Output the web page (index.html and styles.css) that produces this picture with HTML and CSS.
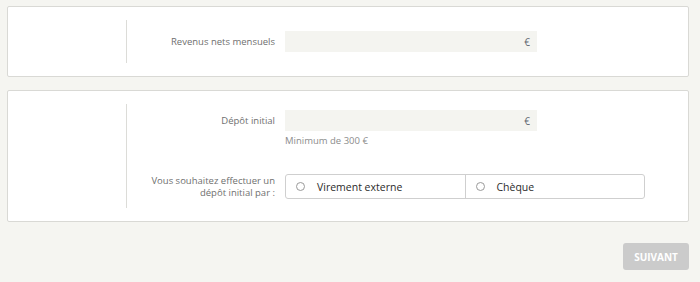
FILE: index.html
```html
<!DOCTYPE html>
<html lang="fr">
<head>
  <meta charset="UTF-8" />
  <title>Ouverture de compte</title>
  <link rel="stylesheet" href="styles.css">
</head>
<body>

  <div class="card card-first">
    <div class="side"></div>
    <div class="fields">
      <div class="row">
        <label class="label" for="revenus">Revenus nets mensuels</label>
        <div class="money">
          <input type="text" id="revenus">
          <span class="currency">€</span>
        </div>
      </div>
    </div>
  </div>

  <div class="card card-second">
    <div class="side"></div>
    <div class="fields">
      <div class="row">
        <label class="label" for="depot">Dépôt initial</label>
        <div class="money">
          <input type="text" id="depot">
          <span class="currency">€</span>
        </div>
      </div>
      <div class="hint">Minimum de 300 €</div>

      <div class="row row-radio">
        <div class="label">Vous souhaitez effectuer un<br>dépôt initial par :</div>
        <div class="radio-group">
          <label class="radio-option">
            <input type="radio" name="mode">
            <span>Virement externe</span>
          </label>
          <label class="radio-option">
            <input type="radio" name="mode">
            <span>Chèque</span>
          </label>
        </div>
      </div>
    </div>
  </div>

  <div class="actions">
    <button class="next" disabled>SUIVANT</button>
  </div>

</body>
</html>
```

FILE: styles.css
```css
body {
  font-family: "Open Sans", Arial, sans-serif;
  background: #f5f5f1;
  margin: 0;
  padding: 6px 11px 0 7px;
}

.card {
  display: flex;
  background: #fff;
  border: 1px solid #d9d9d5;
  border-radius: 2px;
}

.card-first {
  padding: 13px 0 13px;
  margin-bottom: 13px;
}

.card-second {
  padding: 13px 0 13px;
}

.side {
  width: 118px;
  border-right: 1px solid #dcdcd8;
}

.fields {
  flex: 1;
}

.card-first .fields {
  padding: 11px 0 11px;
}

.card-second .fields {
  padding: 6px 0 9px;
}

.row {
  display: flex;
  align-items: center;
}

.label {
  width: 148px;
  margin-right: 10px;
  text-align: right;
  font-size: 9.5px;
  line-height: 12px;
  color: #6f6f6f;
}

.money {
  position: relative;
  width: 252px;
}

.money input {
  display: block;
  width: 100%;
  height: 21px;
  box-sizing: border-box;
  border: none;
  background: #f4f4f0;
  padding: 0 20px 0 8px;
  font-family: inherit;
  font-size: 10px;
}

.currency {
  position: absolute;
  right: 7px;
  top: 4px;
  font-size: 10px;
  color: #5f6670;
}

.hint {
  margin: 4px 0 0 158px;
  font-size: 9.5px;
  line-height: 12px;
  color: #8c8c8c;
}

.row-radio {
  margin-top: 27px;
}

.radio-group {
  display: flex;
  width: 360px;
  height: 25px;
  box-sizing: border-box;
  border: 1px solid #cfcfcf;
  border-radius: 3px;
}

.radio-option {
  flex: 1;
  display: flex;
  align-items: center;
  padding-left: 10px;
  font-size: 10.5px;
  color: #2b2b2b;
}

.radio-option + .radio-option {
  border-left: 1px solid #cfcfcf;
}

.radio-option input {
  appearance: none;
  width: 9px;
  height: 9px;
  margin: 0 12px 0 0;
  border: 1px solid #9a9a9a;
  border-radius: 50%;
  background: #fff;
}

.actions {
  display: flex;
  justify-content: flex-end;
  margin-top: 21px;
}

.next {
  width: 66px;
  height: 27px;
  background: #cbcbcb;
  color: #fff;
  border: none;
  border-radius: 3px;
  font-family: inherit;
  font-size: 10px;
  font-weight: bold;
}
```
